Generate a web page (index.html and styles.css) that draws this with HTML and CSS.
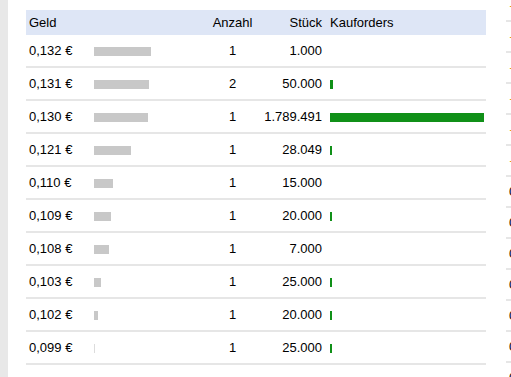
FILE: index.html
```html
<!DOCTYPE html>
<html lang="de">
<head>
<meta charset="utf-8">
<link rel="stylesheet" href="styles.css">
</head>
<body>
<div class="page">
  <div class="strip"></div>
  <div class="book">
    <div class="row head">
      <div class="c-geld">Geld</div>
      <div class="c-bar"></div>
      <div class="c-anz">Anzahl</div>
      <div class="c-st">Stück</div>
      <div class="c-kauf">Kauforders</div>
    </div>
    <div class="row"><div class="c-geld">0,132 €</div><div class="c-bar"><span class="gbar" style="width:57px"></span></div><div class="c-anz">1</div><div class="c-st">1.000</div><div class="c-kauf"></div></div>
    <div class="row"><div class="c-geld">0,131 €</div><div class="c-bar"><span class="gbar" style="width:55px"></span></div><div class="c-anz">2</div><div class="c-st">50.000</div><div class="c-kauf"><span class="kbar" style="width:3px"></span></div></div>
    <div class="row"><div class="c-geld">0,130 €</div><div class="c-bar"><span class="gbar" style="width:54px"></span></div><div class="c-anz">1</div><div class="c-st">1.789.491</div><div class="c-kauf"><span class="kbar" style="width:154px"></span></div></div>
    <div class="row"><div class="c-geld">0,121 €</div><div class="c-bar"><span class="gbar" style="width:37px"></span></div><div class="c-anz">1</div><div class="c-st">28.049</div><div class="c-kauf"><span class="kbar" style="width:2px"></span></div></div>
    <div class="row"><div class="c-geld">0,110 €</div><div class="c-bar"><span class="gbar" style="width:19px"></span></div><div class="c-anz">1</div><div class="c-st">15.000</div><div class="c-kauf"></div></div>
    <div class="row"><div class="c-geld">0,109 €</div><div class="c-bar"><span class="gbar" style="width:17px"></span></div><div class="c-anz">1</div><div class="c-st">20.000</div><div class="c-kauf"><span class="kbar" style="width:2px"></span></div></div>
    <div class="row"><div class="c-geld">0,108 €</div><div class="c-bar"><span class="gbar" style="width:15px"></span></div><div class="c-anz">1</div><div class="c-st">7.000</div><div class="c-kauf"></div></div>
    <div class="row"><div class="c-geld">0,103 €</div><div class="c-bar"><span class="gbar" style="width:7px"></span></div><div class="c-anz">1</div><div class="c-st">25.000</div><div class="c-kauf"><span class="kbar" style="width:2px"></span></div></div>
    <div class="row"><div class="c-geld">0,102 €</div><div class="c-bar"><span class="gbar" style="width:4px"></span></div><div class="c-anz">1</div><div class="c-st">20.000</div><div class="c-kauf"><span class="kbar" style="width:2px"></span></div></div>
    <div class="row"><div class="c-geld">0,099 €</div><div class="c-bar"><span class="gbar faint" style="width:1px"></span></div><div class="c-anz">1</div><div class="c-st">25.000</div><div class="c-kauf"><span class="kbar" style="width:2px"></span></div></div>
  </div>
  <div class="side">
    <div class="srow up">–</div>
    <div class="srow up">–</div>
    <div class="srow up">–</div>
    <div class="srow up">–</div>
    <div class="srow up">–</div>
    <div class="srow up">–</div>
    <div class="srow">0,1</div>
    <div class="srow">0,1</div>
    <div class="srow">0,1</div>
    <div class="srow">0,1</div>
    <div class="srow">0,1</div>
    <div class="srow">0,1</div>
    <div class="srow">0,1</div>
  </div>
</div>
</body>
</html>
```

FILE: styles.css
```css
html, body {
  margin: 0;
  padding: 0;
  background: #fff;
  overflow: hidden;
}
body {
  width: 511px;
  height: 377px;
  font-family: "Liberation Sans", Arial, Helvetica, sans-serif;
  font-size: 13px;
  color: #000;
}
.page {
  display: flex;
  align-items: flex-start;
  height: 377px;
}
.strip {
  flex: 0 0 8px;
  align-self: stretch;
  background: #e8e8e8;
}
.book {
  flex: 0 0 460px;
  margin-left: 18px;
  margin-top: 10px;
}
.row {
  display: grid;
  grid-template-columns: 68px 118px 41px 73px 160px;
  align-items: center;
  height: 31px;
  border-bottom: 2px solid #e6e6e6;
}
.row.head {
  height: 25px;
  border-bottom: 0;
  background: #dee6f6;
}
.c-geld {
  padding-left: 3px;
  white-space: nowrap;
}
.c-bar {
  display: flex;
  align-items: center;
}
.c-anz {
  text-align: center;
  white-space: nowrap;
}
.c-st {
  text-align: right;
  padding-right: 4px;
  white-space: nowrap;
}
.c-kauf {
  padding-left: 4px;
  display: flex;
  align-items: center;
  white-space: nowrap;
}
.gbar {
  display: block;
  height: 9px;
  margin-top: 2px;
  background: #c8c8c8;
}
.gbar.faint {
  background: #dcdcdc;
}
.kbar {
  display: block;
  height: 9px;
  margin-top: 2px;
  background: #109018;
}
.side {
  flex: 0 0 40px;
  margin-left: 20px;
  margin-top: -9px;
  overflow: hidden;
}
.srow {
  height: 29px;
  line-height: 29px;
  padding-left: 3px;
  border-bottom: 2px solid #e6e6e6;
  white-space: nowrap;
}
.srow.up {
  color: #e08a00;
  padding-left: 4px;
}
```
